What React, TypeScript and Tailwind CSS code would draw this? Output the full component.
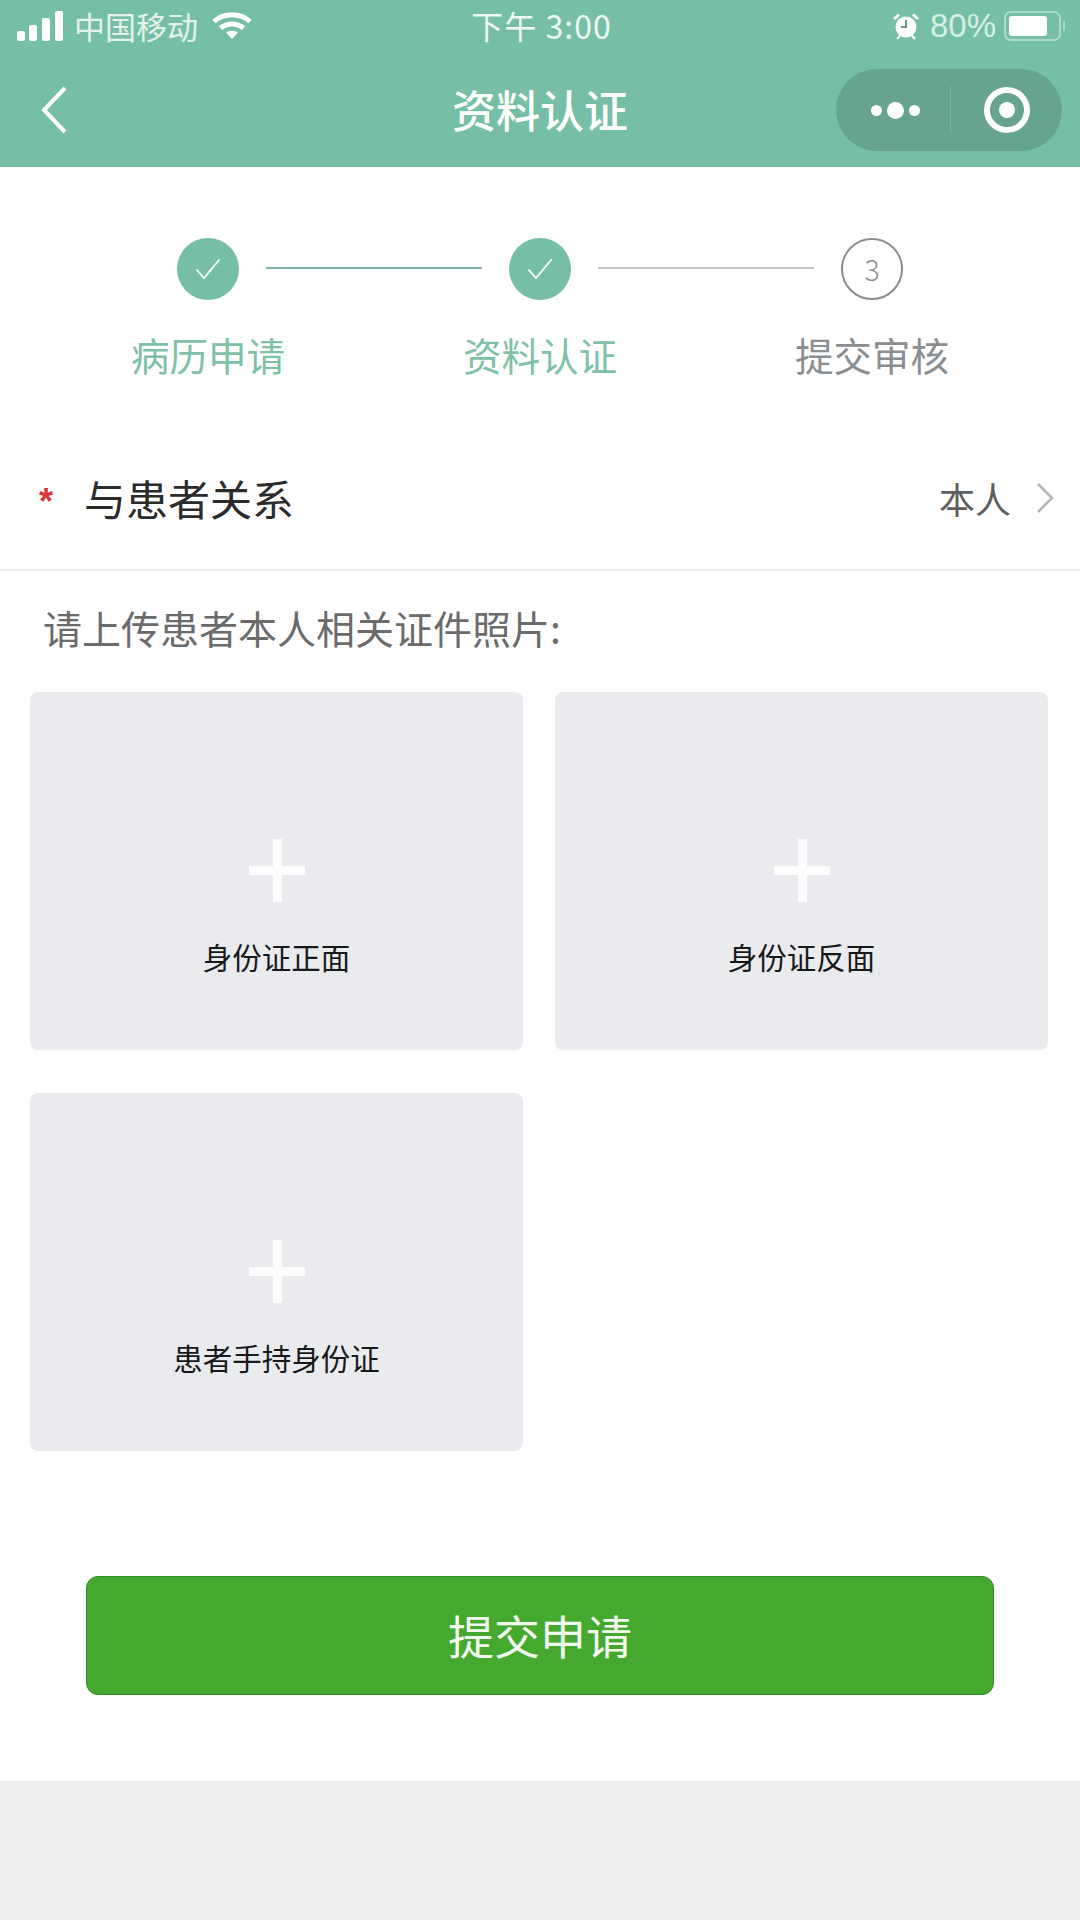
const CJK = "font-['Noto_Sans_CJK_SC','Noto_Sans',sans-serif]";

function Signal() {
  return (
    <svg width="46" height="30" viewBox="0 0 46 30" fill="#ffffff">
      <rect x="0" y="20" width="8" height="10" rx="2" />
      <rect x="12" y="14" width="8" height="16" rx="2" />
      <rect x="25" y="7" width="8" height="23" rx="2" />
      <rect x="38" y="0" width="8" height="30" rx="2" />
    </svg>
  );
}

function Wifi() {
  return (
    <svg width="40" height="30" viewBox="0 0 40 30" fill="none" stroke="#ffffff" strokeWidth="5">
      <path d="M2 10.5C12 1.5 28 1.5 38 10.5" />
      <path d="M8.5 17C15 11.5 25 11.5 31.500 17" />
      <path d="M14 21.5L20 28L26 21.5C23 19 17 19 14 21.5Z" fill="#ffffff" stroke="none" />
    </svg>
  );
}

function Alarm() {
  return (
    <svg width="26" height="28" viewBox="0 0 26 28" fill="none">
      <circle cx="13" cy="15" r="10.500" fill="#ffffff" />
      <path d="M1 7L6 2.500M25 7L20 2.500" stroke="#ffffff" strokeWidth="3" />
      <path d="M4 27L7 23.500M22 27L19 23.500" stroke="#ffffff" strokeWidth="2" />
      <path d="M13 8V15H8" stroke="#5f9f8a" strokeWidth="2" />
    </svg>
  );
}

function Battery() {
  return (
    <svg width="62" height="30" viewBox="0 0 62 30" fill="none">
      <rect x="1" y="1" width="55" height="28" rx="6" stroke="#a9dccb" strokeWidth="2" />
      <rect x="5" y="5" width="38" height="20" rx="3" fill="#ffffff" />
      <path d="M60 10V20" stroke="#a9dccb" strokeWidth="2" />
    </svg>
  );
}

function Check() {
  return (
    <svg width="26" height="22" viewBox="0 0 26 22" fill="none" stroke="#ffffff" strokeWidth="1.800">
      <path d="M1.500 11.500L9 20L24.500 1.500" />
    </svg>
  );
}

function DoneCircle() {
  return (
    <div className="flex h-[62px] w-[62px] items-center justify-center rounded-full bg-[#76bfa6]">
      <Check />
    </div>
  );
}

function UploadCard({ label }: { label: string }) {
  return (
    <div className="flex h-[358px] flex-col items-center rounded-[8px] bg-[#e9ebef] pt-[147px]">
      <svg width="56" height="63" viewBox="0 0 56 63" fill="#fdfdfe">
        <rect x="0" y="27" width="56" height="9" />
        <rect x="24" y="0" width="9" height="63" />
      </svg>
      <div className="mt-[36px] text-[29.5px] leading-[36px] text-[#17181a]">{label}</div>
    </div>
  );
}

export default function App() {
  return (
    <div className={`${CJK} flex min-h-[1920px] w-[1080px] flex-col bg-white`}>
      {/* cabecera */}
      <div className="flex h-[167px] flex-col bg-[#76bfa6] text-white">
        <div className="flex h-[56px] items-center justify-between pb-[4px] pl-[17px] pr-[14px]">
          <div className="flex w-[300px] items-center">
            <Signal />
            <span className="ml-[11px] text-[31px] leading-[40px] text-[#e3f3ec]">中国移动</span>
            <span className="ml-[14px]"><Wifi /></span>
          </div>
          <div className="mb-[2px] text-[32px] leading-[40px] tracking-[1px] text-[#eef8f4]">下午 3:00</div>
          <div className="flex w-[300px] items-center justify-end">
            <Alarm />
            <span className="ml-[11px] font-['Liberation_Sans',sans-serif] text-[33px] leading-[40px] text-[#d5efe6]">80%</span>
            <span className="ml-[8px]"><Battery /></span>
          </div>
        </div>
        <div className="relative flex flex-1 items-center justify-center pb-[6px]">
          <svg className="absolute left-[40px] top-[30px]" width="28" height="48" viewBox="0 0 28 48" fill="none" stroke="#ffffff" strokeWidth="4">
            <path d="M25 2L4 24L25 46" />
          </svg>
          <div className="text-[44px] font-medium leading-[56px]">资料认证</div>
          <div className="absolute left-[836px] top-[13px] flex h-[82px] w-[226px] items-center rounded-full bg-[#66a48f]">
            <div className="flex w-[114px] items-center justify-center gap-[5px] pl-[5px]">
              <span className="h-[11px] w-[11px] rounded-full bg-white" />
              <span className="h-[17px] w-[17px] rounded-full bg-white" />
              <span className="h-[11px] w-[11px] rounded-full bg-white" />
            </div>
            <div className="h-[48px] w-px bg-[#79b29f]" />
            <div className="flex flex-1 items-center justify-center">
              <div className="flex h-[46px] w-[46px] items-center justify-center rounded-full border-[6px] border-white">
                <span className="h-[16px] w-[16px] rounded-full bg-white" />
              </div>
            </div>
          </div>
        </div>
      </div>

      {/* pasos */}
      <div className="flex items-center justify-center pt-[71px]">
        <DoneCircle />
        <div className="mx-[27px] mb-[2px] h-[2px] w-[216px] bg-[#7fb3a0]" />
        <DoneCircle />
        <div className="mx-[27px] mb-[2px] h-[2px] w-[216px] bg-[#c4c6c6]" />
        <div className={`${CJK} flex h-[62px] w-[62px] items-center justify-center rounded-full border-2 border-[#8b8e90] text-[29px] font-light text-[#8b8e90]`}>3</div>
      </div>
      <div className="mt-[30px] grid grid-cols-3 px-[42px] text-center text-[38.5px] leading-[48px]">
        <div className="text-[#7fc0a8]">病历申请</div>
        <div className="text-[#7fc0a8]">资料认证</div>
        <div className="text-[#8a8e91]">提交审核</div>
      </div>

      {/* relación */}
      <div className="mt-[63px] flex h-[130px] items-center border-b-2 border-[#ebecec] pb-[15px] pl-[39px] pr-[26px]">
        <span className="mt-[8px] font-['Liberation_Sans',sans-serif] text-[36px] font-bold leading-[36px] text-[#d9363a]">*</span>
        <span className="ml-[31px] text-[42px] leading-[52px] text-[#2b2b2b]">与患者关系</span>
        <span className="ml-auto text-[36px] leading-[46px] text-[#5e5e5e]">本人</span>
        <svg className="ml-[25px]" width="18" height="32" viewBox="0 0 18 32" fill="none" stroke="#b5b5b5" strokeWidth="2.500">
          <path d="M2 2L16 16L2 30" />
        </svg>
      </div>

      <div className="mt-[32px] pl-[43px] text-[39px] leading-[48px] text-[#6b6b6b]">请上传患者本人相关证件照片:</div>

      <div className="mt-[41px] grid grid-cols-2 gap-x-[32px] gap-y-[43px] pl-[30px] pr-[32px]">
        <UploadCard label="身份证正面" />
        <UploadCard label="身份证反面" />
        <UploadCard label="患者手持身份证" />
      </div>

      <div className="mb-[86px] ml-[86px] mt-[125px] flex h-[119px] w-[908px] items-center justify-center rounded-[12px] border border-[#2f8a25] bg-[#46a92f] pb-[3px] text-[46px] leading-[60px] text-[#f2faef]">
        提交申请
      </div>

      <div className="flex-1 bg-[#eeeeee]" />
    </div>
  );
}
